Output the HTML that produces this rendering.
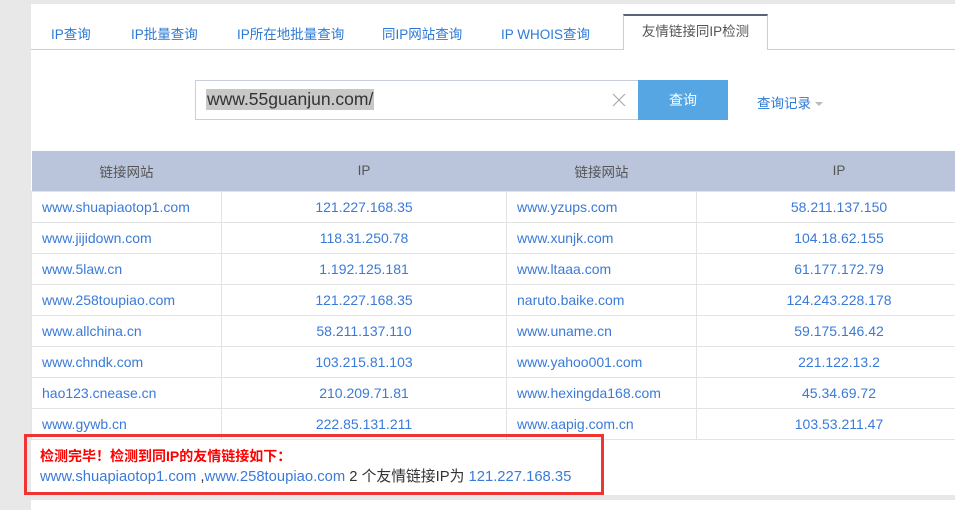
<!DOCTYPE html>
<html><head><meta charset="utf-8"><style>
*{margin:0;padding:0;box-sizing:border-box}
body{width:955px;height:506px;background:#e8e8e8;font-family:"Liberation Sans","Noto Sans CJK SC",sans-serif;font-size:13px;position:relative;overflow:hidden}
.panel{position:absolute;left:31px;top:4px;width:924px;height:491px;background:#fff;overflow:hidden}
.bot{position:absolute;left:31px;top:500px;width:924px;height:10px;background:#fff}
.tabline{position:absolute;left:31px;top:49px;width:924px;height:1px;background:#c8cedd}
.tab{position:absolute;top:23px;color:#2c7ad6;font-size:13.5px}
.active{position:absolute;left:623px;top:14px;width:145px;height:36px;background:#fff;border:1px solid #c8cedd;border-top:2px solid #5a6478;border-bottom:none;color:#555;text-align:center;line-height:31px;font-size:13.5px}
.input{position:absolute;left:195px;top:80px;width:444px;height:40px;border:1px solid #c8cedd}
.sel{position:absolute;left:206px;top:89px;height:21px;background:#c8c8c8;color:#333;font-size:17.5px;line-height:21px;padding:0 1px}
.x{position:absolute;left:612px;top:93px}
.btn{position:absolute;left:638px;top:80px;width:90px;height:40px;background:#55a6e2;color:#fff;text-align:center;line-height:40px;font-size:14px}
.rec{position:absolute;left:757px;top:92px;color:#2c7ad6;font-size:13.5px}
.rec span{display:inline-block;width:0;height:0;border-left:4px solid transparent;border-right:4px solid transparent;border-top:4px solid #bbb;margin-left:4px;vertical-align:middle}
table{position:absolute;left:0;top:147px;width:950px;border-collapse:collapse;table-layout:fixed}
th{background:#bac5dc;color:#555;font-weight:normal;height:40px;font-size:13.5px}
td{height:31px;border:1px solid #e3e3e3;color:#3a7ad8;font-size:14px;white-space:nowrap}
td.c{text-align:center}
td.l{padding-left:10px}
.red{position:absolute;left:24px;top:434px;width:580px;height:61px;border:3px solid #f03333}
.r1{position:absolute;left:40px;top:446px;color:#f00;font-weight:bold;font-size:14px}
.r2{position:absolute;left:40px;top:465px;font-size:14.8px;color:#333;white-space:nowrap}
.r2 a{color:#3a7ad8;text-decoration:none}
</style></head><body>
<div class="panel">
<table>
<colgroup><col style="width:190px"><col style="width:285px"><col style="width:190px"><col style="width:285px"></colgroup>
<tr><th>链接网站</th><th>IP</th><th>链接网站</th><th>IP</th></tr>
<tr><td class="l">www.shuapiaotop1.com</td><td class="c">121.227.168.35</td><td class="l">www.yzups.com</td><td class="c">58.211.137.150</td></tr>
<tr><td class="l">www.jijidown.com</td><td class="c">118.31.250.78</td><td class="l">www.xunjk.com</td><td class="c">104.18.62.155</td></tr>
<tr><td class="l">www.5law.cn</td><td class="c">1.192.125.181</td><td class="l">www.ltaaa.com</td><td class="c">61.177.172.79</td></tr>
<tr><td class="l">www.258toupiao.com</td><td class="c">121.227.168.35</td><td class="l">naruto.baike.com</td><td class="c">124.243.228.178</td></tr>
<tr><td class="l">www.allchina.cn</td><td class="c">58.211.137.110</td><td class="l">www.uname.cn</td><td class="c">59.175.146.42</td></tr>
<tr><td class="l">www.chndk.com</td><td class="c">103.215.81.103</td><td class="l">www.yahoo001.com</td><td class="c">221.122.13.2</td></tr>
<tr><td class="l">hao123.cnease.cn</td><td class="c">210.209.71.81</td><td class="l">www.hexingda168.com</td><td class="c">45.34.69.72</td></tr>
<tr><td class="l">www.gywb.cn</td><td class="c">222.85.131.211</td><td class="l">www.aapig.com.cn</td><td class="c">103.53.211.47</td></tr>
</table>
</div>
<div class="bot"></div>
<div class="tabline"></div>
<div class="tab" style="left:51px">IP查询</div>
<div class="tab" style="left:131px">IP批量查询</div>
<div class="tab" style="left:237px">IP所在地批量查询</div>
<div class="tab" style="left:382px">同IP网站查询</div>
<div class="tab" style="left:501px">IP WHOIS查询</div>
<div class="active">友情链接同IP检测</div>
<div class="input"></div>
<div class="sel">www.55guanjun.com/</div>
<svg class="x" width="14" height="14" viewBox="0 0 14 14"><path d="M1 1L13 13M13 1L1 13" stroke="#aaa" stroke-width="1.2"/></svg>
<div class="btn">查询</div>
<div class="rec">查询记录<span></span></div>
<div class="red"></div>
<div class="r1">检测完毕！检测到同IP的友情链接如下：</div>
<div class="r2"><a>www.shuapiaotop1.com</a> ,<a>www.258toupiao.com</a> 2 个友情链接IP为 <a>121.227.168.35</a></div>
</body></html>
